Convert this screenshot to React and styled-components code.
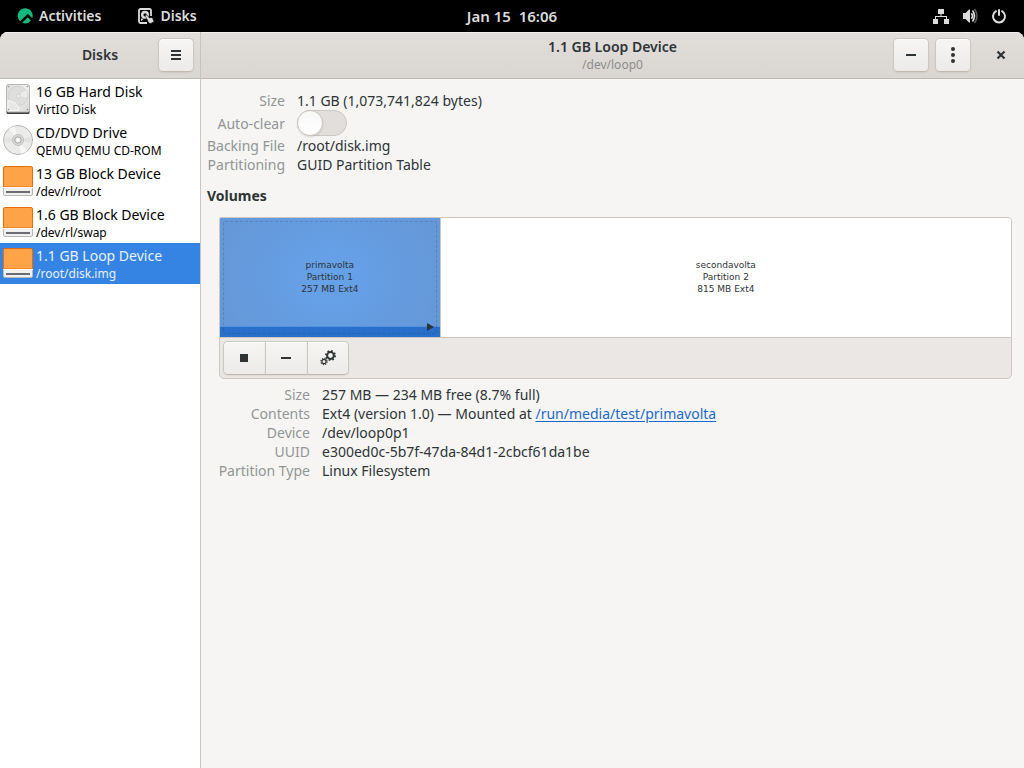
import React, { useState } from "react";
import styled, { createGlobalStyle, css } from "styled-components";

const Global = createGlobalStyle`
  *, *::before, *::after { box-sizing: border-box; }
  html, body { margin: 0; padding: 0; background: #000; }
  body, button, input { font-family: "Noto Sans", "Open Sans", sans-serif; }
  button { margin: 0; padding: 0; border: 0; background: none; color: inherit; }
`;

const Screen = styled.div`
  min-height: 100vh;
  display: flex;
  flex-direction: column;
  background: #000;
  color: #2e3436;
  font-size: 14px;
  line-height: 19px;
`;

const TopBar = styled.header`
  height: 32px;
  display: grid;
  grid-template-columns: 1fr auto 1fr;
  align-items: center;
  padding: 0 17px;
  color: #dcdcdc;
`;

const BarGroup = styled.div`
  display: flex;
  align-items: center;
  gap: ${(p) => p.$gap}px;
  justify-content: ${(p) => (p.$end ? "flex-end" : "flex-start")};
`;

const BarButton = styled.button`
  display: flex;
  align-items: center;
  gap: 6px;
  font-size: ${(p) => (p.$clock ? 15 : 14)}px;
  font-weight: 600;
  line-height: 20px;
  white-space: pre;
`;

const Window = styled.div`
  flex: 1;
  display: grid;
  grid-template-columns: 201px minmax(0, 1fr);
  grid-template-rows: 47px 1fr;
  border-radius: 8px 8px 0 0;
  overflow: hidden;
  background: #f6f5f4;
`;

const HeaderBar = styled.div`
  display: grid;
  grid-template-columns: 1fr auto 1fr;
  align-items: center;
  padding: ${(p) => (p.$divided ? "0 6px" : "0 5px")};
  background: linear-gradient(#e1dedb, #dad6d2);
  border-bottom: 1px solid #bfb8b1;
  border-right: ${(p) => (p.$divided ? "1px solid #c9c3bd" : "0")};
  box-shadow: inset 0 1px #f3f2f1;
`;

const Titles = styled.div`
  grid-column: 2;
  text-align: center;
`;

const Title = styled.h1`
  margin: 0;
  font-size: 14px;
  font-weight: 600;
  line-height: 18px;
`;

const Subtitle = styled.div`
  font-size: 12px;
  line-height: 17px;
  color: #8b8d8c;
`;

const HeaderActions = styled.div`
  grid-column: 3;
  display: flex;
  justify-content: flex-end;
  gap: 6px;
`;

const raised = css`
  border: 1px solid #cdc7c2;
  border-bottom-color: #bfb8b1;
  background: linear-gradient(#f6f5f4, #edebe9);
  box-shadow: inset 0 1px #fff, 0 1px 2px rgba(0, 0, 0, 0.07);
`;

const HeaderButton = styled.button`
  width: 36px;
  height: 34px;
  display: flex;
  align-items: center;
  justify-content: center;
  border-radius: 5px;
  ${(p) => (p.$flat ? "margin-left: 6px;" : raised)}
`;

const Sidebar = styled.nav`
  background: #fff;
  border-right: 1px solid #cdc7c2;
`;

const DeviceRow = styled.button`
  width: 100%;
  height: 41px;
  display: flex;
  align-items: center;
  gap: 2px;
  padding: 0 2px;
  text-align: left;
  color: ${(p) => (p.$active ? "#e8f1fb" : "#000")};
  background: ${(p) => (p.$active ? "#3584e4" : "transparent")};
  svg { margin-bottom: 1px; }
`;

const DeviceText = styled.span`
  display: flex;
  flex-direction: column;
  white-space: nowrap;
`;

const DeviceName = styled.span`
  font-size: 14px;
  line-height: 19px;
`;

const DevicePath = styled.span`
  font-size: 12px;
  line-height: 17px;
`;

const Content = styled.main`
  padding: 12px 12px 12px 6px;
`;

const Facts = styled.dl`
  display: grid;
  grid-template-columns: ${(p) => p.$label}px minmax(0, 1fr);
  column-gap: 12px;
  margin: 0;
`;

const Term = styled.dt`
  display: flex;
  align-items: center;
  justify-content: flex-end;
  white-space: nowrap;
  color: #929595;
`;

const Detail = styled.dd`
  margin: 0;
  min-height: 19px;
`;

const Link = styled.a`
  color: #1b6acb;
  text-underline-offset: 2px;
`;

const Switch = styled.input`
  appearance: none;
  display: block;
  width: 50px;
  height: 26px;
  margin: 0;
  border: 1px solid #cdc7c2;
  border-radius: 13px;
  background: #e1dedb;

  &::before {
    content: "";
    display: block;
    width: 26px;
    height: 26px;
    margin: -1px;
    border: 1px solid #cdc7c2;
    border-radius: 13px;
    background: linear-gradient(#f8f7f7, #fff);
    box-shadow: 0 1px 2px rgba(0, 0, 0, 0.12);
  }
  &:checked { background: #3584e4; }
  &:checked::before { margin-left: 23px; }
`;

const SectionTitle = styled.h2`
  margin: 12px 0;
  font-size: 14px;
  font-weight: 700;
  line-height: 19px;
`;

const Section = styled.section`
  padding-left: 12px;
`;

const VolumeFrame = styled.div`
  border: 1px solid #cdc7c2;
  border-radius: 2px 4px 5px 5px;
  overflow: hidden;
  background: #ebe7e4;
`;

const VolumeMap = styled.div`
  display: flex;
  height: 120px;
  background: #fff;
  border-bottom: 1px solid #cdc7c2;
`;

const Partition = styled.button`
  flex: ${(p) => p.$share} 1 0;
  display: grid;
  place-items: center;
  padding-bottom: 2px;
  color: #2e3436;
  font-family: "DejaVu Sans", sans-serif;
  font-size: 9px;
  line-height: 12px;
  white-space: pre-line;
  border-left: ${(p) => (p.$active ? "0" : "1px solid #cdc7c2")};
  ${(p) =>
    p.$active &&
    css`
      position: relative;
      background:
        linear-gradient(transparent 108px, #5492dd 108px, #5492dd 109px, rgba(30, 104, 200, 0.85) 109px),
        radial-gradient(ellipse 52% 82% at center, #66a2ea, #6498d8);
      &::after {
        content: "";
        position: absolute;
        inset: 3px;
        border: 1px dashed rgba(46, 52, 54, 0.2);
        border-radius: 2px;
      }
    `}
`;

const MountedMark = styled.svg`
  position: absolute;
  right: 6px;
  bottom: 6px;
`;

const VolumeTools = styled.div`
  display: flex;
  padding: 3px;
`;

const ToolButton = styled.button`
  width: 42px;
  height: 34px;
  display: flex;
  align-items: center;
  justify-content: center;
  padding-right: 2px;
  ${raised}
  border-right-width: 0;
  &:first-child { border-radius: 5px 0 0 5px; }
  &:last-child { border-radius: 0 5px 5px 0; border-right-width: 1px; padding-right: 0; }
`;

const VolumeFacts = styled.div`
  padding-top: 6px;
`;

const Icon = ({ size = 16, children }) => (
  <svg width={size} height={size} viewBox={`0 0 ${size} ${size}`} fill="currentColor" aria-hidden="true">
    {children}
  </svg>
);

const RockyIcon = () => (
  <Icon>
    <g fill="#10b981">
      <path d="M3.100 13.300A7.500 7.500 0 1 1 15.300 10.200L10.800 5.700z" />
      <path d="M5.200 14.800L10.800 9.300L13.900 12.400A7.500 7.500 0 0 1 5.200 14.800z" />
    </g>
  </Icon>
);

const DisksIcon = () => (
  <Icon>
    <path d="M13 8V2.500A1.500 1.500 0 0 0 11.500 1h-9A1.500 1.500 0 0 0 1 2.500v11A1.500 1.500 0 0 0 2.500 15H9" fill="none" stroke="currentColor" strokeWidth="1.800" />
    <circle cx="7" cy="6.800" r="2.800" fill="none" stroke="currentColor" strokeWidth="2.400" />
    <path d="M3 10.500l3 .3L3 13.300z" />
    <path d="M7 7.300l2.200-.3 2.100 3 2-.6 2 1.300-.3 1.300 1 1-.6 1.500-1.400-.2-.7 1.200-2-.3-1.100-1.400-.9-2z" stroke="#000" strokeWidth=".5" />
  </Icon>
);

const NetworkIcon = () => (
  <Icon>
    <path d="M5 1h6v5H8.500v2H14v3h2v5h-5v-5h2V9H3v2h2v5H0v-5h2V8h5.500V6H5z" />
  </Icon>
);

const VolumeIcon = () => (
  <Icon>
    <path d="M1 5h2.500L7 1.500H8v13H7L3.500 11H1z" />
    <path d="M9.500 5.200q2.200 2.800 0 5.600" fill="none" stroke="currentColor" strokeWidth="1.600" />
    <path d="M10.500 2.600q4 5.400 0 10.800" fill="none" stroke="currentColor" strokeWidth="1.600" />
    <path d="M12.500 1q5 7 0 14" fill="none" stroke="currentColor" strokeOpacity=".4" strokeWidth="1.600" />
  </Icon>
);

const PowerIcon = () => (
  <Icon>
    <path d="M5 3.200a6 6 0 1 0 6 0" fill="none" stroke="currentColor" strokeWidth="2" strokeLinecap="round" />
    <rect x="7" y="1" width="2" height="7" rx="1" />
  </Icon>
);

const MenuIcon = () => (
  <Icon>
    <path d="M3 3h10v2H3zM3 7h10v2H3zM3 11h10v2H3z" />
  </Icon>
);

const MinusIcon = () => (
  <Icon>
    <path d="M3 7h10v2H3z" />
  </Icon>
);

const DotsIcon = () => (
  <Icon>
    <circle cx="8" cy="2" r="2" />
    <circle cx="8" cy="8" r="2" />
    <circle cx="8" cy="14" r="2" />
  </Icon>
);

const CloseIcon = () => (
  <Icon>
    <path d="M4.500 4.500l7 7M11.500 4.500l-7 7" fill="none" stroke="currentColor" strokeWidth="2.200" />
  </Icon>
);

const StopIcon = () => (
  <Icon>
    <path d="M4 4h8v8H4z" />
  </Icon>
);

const GearsIcon = () => (
  <Icon>
    <g fill="none" stroke="currentColor">
      <circle cx="10.500" cy="5.500" r="3.400" strokeWidth="2" />
      <circle cx="10.500" cy="5.500" r="4.700" strokeWidth="1.600" strokeDasharray="1.700 1.991" />
      <circle cx="4" cy="11.500" r="2.100" strokeWidth="1.200" />
      <circle cx="4" cy="11.500" r="3.100" strokeWidth="1.200" strokeDasharray="1.200 1.235" />
    </g>
  </Icon>
);

const HardDiskIcon = () => (
  <Icon size={32}>
    <defs>
      <linearGradient id="hdd" x1="0" y1="0" x2="1" y2="1">
        <stop offset="0" stopColor="#dcdcda" />
        <stop offset=".5" stopColor="#eeeeec" />
        <stop offset="1" stopColor="#d8d8d6" />
      </linearGradient>
    </defs>
    <rect x="4.500" y="4" width="23" height="27" rx="1.500" fill="#3d3f42" />
    <rect x="4.500" y="1.500" width="23" height="27.500" rx="2" fill="url(#hdd)" stroke="#b7b8b5" />
    <circle cx="16" cy="13" r="9.800" fill="#dededc" stroke="#cacac8" strokeWidth=".7" />
    <path d="M16 13L23.500 7A9.500 9.500 0 0 1 25.500 14z" fill="#ececea" />
    <path d="M6 17.500q7 1 10.500 6.500v3.500H6z" fill="#e8e8e6" stroke="#f8f8f7" />
    <circle cx="16.500" cy="13" r="1.800" fill="#f2f2f0" stroke="#c2c2c0" strokeWidth=".6" />
    <g fill="#8e908c">
      <circle cx="6.500" cy="3.500" r=".8" />
      <circle cx="25.500" cy="3.500" r=".8" />
      <circle cx="6.500" cy="26.500" r=".8" />
      <circle cx="25.500" cy="26.500" r=".8" />
    </g>
  </Icon>
);

const OpticalIcon = () => (
  <Icon size={32}>
    <circle cx="16" cy="16" r="14.500" fill="#ebebe9" stroke="#b4b5b2" />
    <path d="M16 16L7 5A14 14 0 0 1 13 2.300zM16 16l9 11a14 14 0 0 1-6 2.700z" fill="#f6f6f5" />
    <path d="M16 16L29.500 12.500A14 14 0 0 1 29.500 19zM16 16L2.500 12.500a14 14 0 0 0 0 6.500z" fill="#e2e2e0" />
    <circle cx="16" cy="16" r="5.500" fill="#dadad8" stroke="#c0c1be" />
    <circle cx="16" cy="16" r="3.200" fill="#eeeeec" stroke="#a5a7a3" />
    <circle cx="16" cy="16" r="1.500" fill="#fff" />
  </Icon>
);

const BlockIcon = () => (
  <Icon size={32}>
    <path d="M1.500 22V3a1.500 1.500 0 0 1 1.500-1.500h26A1.500 1.500 0 0 1 30.500 3v19z" fill="#ffa348" stroke="#e66d0c" />
    <path d="M1.500 22.500h29V29a1.500 1.500 0 0 1-1.500 1.500H3A1.500 1.500 0 0 1 1.500 29z" fill="#f0f0ee" stroke="#b8b9b5" />
    <path d="M1 22h30v1H1z" fill="#f8f8f6" />
    <path d="M4 26h24v2H4z" fill="#6d6b73" />
  </Icon>
);

const devices = [
  { name: "16 GB Hard Disk", path: "VirtIO Disk", Glyph: HardDiskIcon },
  { name: "CD/DVD Drive", path: "QEMU QEMU CD-ROM", Glyph: OpticalIcon },
  { name: "13 GB Block Device", path: "/dev/rl/root", Glyph: BlockIcon },
  { name: "1.6 GB Block Device", path: "/dev/rl/swap", Glyph: BlockIcon },
  { name: "1.1 GB Loop Device", path: "/root/disk.img", Glyph: BlockIcon },
];

export default function App() {
  const [autoClear, setAutoClear] = useState(false);

  return (
    <>
      <Global />
      <Screen>
        <TopBar>
          <BarGroup $gap={37}>
            <BarButton><RockyIcon />Activities</BarButton>
            <BarButton><DisksIcon />Disks</BarButton>
          </BarGroup>
          <BarButton $clock>{"Jan 15  16:06"}</BarButton>
          <BarGroup $gap={13} $end>
            <BarButton aria-label="Network"><NetworkIcon /></BarButton>
            <BarButton aria-label="Volume"><VolumeIcon /></BarButton>
            <BarButton aria-label="Power"><PowerIcon /></BarButton>
          </BarGroup>
        </TopBar>

        <Window>
          <HeaderBar $divided>
            <Titles><Title>Disks</Title></Titles>
            <HeaderActions>
              <HeaderButton aria-label="Menu"><MenuIcon /></HeaderButton>
            </HeaderActions>
          </HeaderBar>
          <HeaderBar>
            <Titles>
              <Title>1.1 GB Loop Device</Title>
              <Subtitle>/dev/loop0</Subtitle>
            </Titles>
            <HeaderActions>
              <HeaderButton aria-label="Detach device"><MinusIcon /></HeaderButton>
              <HeaderButton aria-label="Drive options"><DotsIcon /></HeaderButton>
              <HeaderButton $flat aria-label="Close"><CloseIcon /></HeaderButton>
            </HeaderActions>
          </HeaderBar>

          <Sidebar>
            {devices.map(({ name, path, Glyph }, i) => (
              <DeviceRow key={name} $active={i === 4}>
                <Glyph />
                <DeviceText>
                  <DeviceName>{name}</DeviceName>
                  <DevicePath>{path}</DevicePath>
                </DeviceText>
              </DeviceRow>
            ))}
          </Sidebar>

          <Content>
            <Facts $label={78}>
              <Term>Size</Term>
              <Detail>1.1 GB (1,073,741,824 bytes)</Detail>
              <Term><label htmlFor="auto-clear">Auto-clear</label></Term>
              <Detail>
                <Switch
                  id="auto-clear"
                  type="checkbox"
                  role="switch"
                  checked={autoClear}
                  onChange={(e) => setAutoClear(e.target.checked)}
                />
              </Detail>
              <Term>Backing File</Term>
              <Detail>/root/disk.img</Detail>
              <Term>Partitioning</Term>
              <Detail>GUID Partition Table</Detail>
            </Facts>

            <SectionTitle>Volumes</SectionTitle>
            <Section>
              <VolumeFrame>
                <VolumeMap>
                  <Partition $share={220} $active>
                    {"primavolta\nPartition 1\n257 MB Ext4"}
                    <MountedMark width="7" height="8" viewBox="0 0 7 8" aria-hidden="true">
                      <path d="M0 0l7 4-7 4z" fill="#2e3436" />
                    </MountedMark>
                  </Partition>
                  <Partition $share={571}>{"secondavolta\nPartition 2\n815 MB Ext4"}</Partition>
                </VolumeMap>
                <VolumeTools>
                  <ToolButton aria-label="Unmount partition"><StopIcon /></ToolButton>
                  <ToolButton aria-label="Delete partition"><MinusIcon /></ToolButton>
                  <ToolButton aria-label="Partition options"><GearsIcon /></ToolButton>
                </VolumeTools>
              </VolumeFrame>
              <VolumeFacts>
                <Facts $label={91}>
                  <Term>Size</Term>
                  <Detail>257 MB — 234 MB free (8.7% full)</Detail>
                  <Term>Contents</Term>
                  <Detail>Ext4 (version 1.0) — Mounted at <Link href="#primavolta">/run/media/test/primavolta</Link></Detail>
                  <Term>Device</Term>
                  <Detail>/dev/loop0p1</Detail>
                  <Term>UUID</Term>
                  <Detail>e300ed0c-5b7f-47da-84d1-2cbcf61da1be</Detail>
                  <Term>Partition Type</Term>
                  <Detail>Linux Filesystem</Detail>
                </Facts>
              </VolumeFacts>
            </Section>
          </Content>
        </Window>
      </Screen>
    </>
  );
}
